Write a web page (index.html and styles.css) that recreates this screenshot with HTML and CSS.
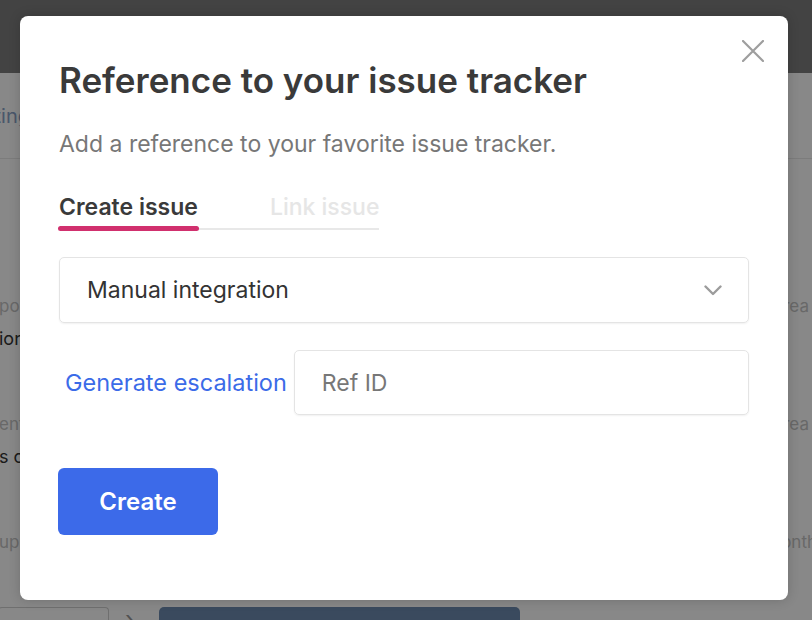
FILE: index.html
```html
<!DOCTYPE html>
<html lang="en">
<head>
<meta charset="utf-8">
<title>Reference to your issue tracker</title>
<link rel="stylesheet" href="styles.css">
</head>
<body>
<div class="page">
  <header class="topbar"></header>
  <nav class="subnav"><span class="subnav-link">Settings</span></nav>
  <main class="rows">
    <div class="row row-tall">
      <div class="row-line"><span class="muted lead">port</span><span class="muted trail">Area</span></div>
      <div class="row-line"><span class="strong lead">ions</span></div>
    </div>
    <div class="row row-tall">
      <div class="row-line"><span class="muted lead">ents</span><span class="muted trail">Area</span></div>
      <div class="row-line"><span class="strong lead">s of</span></div>
    </div>
    <div class="row row-short">
      <div class="row-line"><span class="muted lead">upda</span><span class="muted trail trail-end">Month</span></div>
    </div>
  </main>
  <footer class="page-foot">
    <span class="foot-box"></span>
    <span class="foot-arrow">›</span>
    <span class="foot-btn"></span>
  </footer>
</div>

<div class="overlay"></div>

<section class="modal" role="dialog" aria-labelledby="modal-title">
  <button class="close" aria-label="Close">
    <svg width="22" height="22" viewBox="0 0 22 22"><path d="M1 1 L21 21 M21 1 L1 21" stroke="#9e9e9e" stroke-width="2.2" fill="none" stroke-linecap="round"/></svg>
  </button>
  <h1 id="modal-title" class="title">Reference to your issue tracker</h1>
  <p class="subtitle">Add a reference to your favorite issue tracker.</p>
  <div class="tabs">
    <span class="tab tab-active">Create issue</span>
    <span class="tab tab-idle">Link issue</span>
  </div>
  <div class="select">
    <span class="select-text">Manual integration</span>
    <svg class="chev" width="18" height="11" viewBox="0 0 18 11"><path d="M1.5 1.5 L9 9 L16.5 1.5" stroke="#9c9c9c" stroke-width="2.4" fill="none" stroke-linecap="round" stroke-linejoin="round"/></svg>
  </div>
  <div class="ref-row">
    <a class="gen-link" href="#">Generate escalation</a>
    <div class="ref-input"><span class="placeholder">Ref ID</span></div>
  </div>
  <button class="create">Create</button>
</section>
</body>
</html>
```

FILE: styles.css
```css
* { box-sizing: border-box; }
html, body { margin: 0; padding: 0; }
body {
  width: 812px;
  height: 620px;
  overflow: hidden;
  background: #fff;
  font-family: Inter, "Noto Sans", sans-serif;
  position: relative;
}

/* background page */
.page { display: flex; flex-direction: column; height: 620px; overflow: hidden; }
.topbar { height: 73px; background: #7e7e7e; flex: none; }
.subnav {
  height: 86px;
  border-bottom: 1px solid #e8e8e8;
  display: flex;
  align-items: center;
  flex: none;
}
.subnav-link {
  margin-left: -36px;
  color: #8aa3c8;
  font-size: 20px;
}
.rows { display: flex; flex-direction: column; padding-top: 130px; flex: none; }
.row { display: flex; flex-direction: column; }
.row-tall { height: 118px; }
.row-short { height: 82px; }
.row-line { display: flex; justify-content: space-between; height: 33px; align-items: center; }
.lead { margin-left: -1px; }
.muted { color: #c4c4c4; font-size: 17px; }
.strong { color: #333; font-size: 18px; }
.trail { margin-right: 3px; }
.trail-end { margin-right: -5px; }
.page-foot { display: flex; align-items: flex-start; height: 13px; flex: none; }
.foot-box {
  width: 111px;
  height: 13px;
  border: 1px solid #d0d0d0;
  border-bottom: 0;
  border-radius: 4px 4px 0 0;
  margin-left: -2px;
}
.foot-arrow { color: #999; font-size: 24px; line-height: 13px; margin-left: 16px; margin-top: 6px; height: 13px; }
.foot-btn { width: 361px; height: 13px; background: #6d8bb0; border-radius: 5px 5px 0 0; margin-left: 25px; }

.overlay {
  position: absolute;
  inset: 0;
  background: rgba(0, 0, 0, 0.467);
}

/* modal */
.modal {
  position: absolute;
  left: 20px;
  top: 16px;
  width: 768px;
  height: 584px;
  background: #fff;
  border-radius: 8px;
  box-shadow: 0 0 12px rgba(0, 0, 0, 0.18);
  padding: 43px 39px 0;
  display: flex;
  flex-direction: column;
  align-items: flex-start;
}
.close {
  position: absolute;
  right: 24px;
  top: 24px;
  width: 22px;
  height: 22px;
  padding: 0;
  border: 0;
  background: none;
  display: block;
}
.close svg { display: block; }
.title {
  margin: 0;
  font-size: 35px;
  line-height: 42px;
  font-weight: 600;
  color: #3a3a3a;
}
.subtitle {
  margin: 29px 0 0;
  font-size: 23px;
  line-height: 28px;
  color: #777;
}
.tabs {
  margin-top: 35px;
  display: flex;
  gap: 72px;
  border-bottom: 2px solid #e8e8e8;
}
.tab {
  font-size: 23px;
  line-height: 28px;
  font-weight: 600;
  padding-bottom: 7px;
  position: relative;
}
.tab-active { color: #3a3a3a; }
.tab-active::after {
  content: "";
  position: absolute;
  left: -1px;
  right: -1px;
  bottom: -3px;
  height: 5px;
  border-radius: 3px;
  background: #d1306e;
}
.tab-idle { color: #e6e6e6; font-weight: 500; }

.select {
  margin-top: 27px;
  width: 690px;
  height: 66px;
  border: 1px solid #e4e4e4;
  border-radius: 5px;
  box-shadow: 0 1px 2px rgba(0, 0, 0, 0.06);
  display: flex;
  align-items: center;
  justify-content: space-between;
  padding: 0 26px 0 27px;
}
.select-text { font-size: 23px; color: #333; }
.chev { display: block; }

.ref-row {
  margin-top: 27px;
  width: 690px;
  display: flex;
  align-items: center;
  gap: 7px;
}
.gen-link {
  font-size: 23.5px;
  color: #3b6be8;
  text-decoration: none;
  padding-left: 6px;
  white-space: nowrap;
}
.ref-input {
  flex: 1;
  height: 65px;
  border: 1px solid #e4e4e4;
  border-radius: 5px;
  box-shadow: 0 1px 2px rgba(0, 0, 0, 0.06);
  display: flex;
  align-items: center;
  padding-left: 27px;
}
.placeholder { font-size: 23px; color: #777; }

.create {
  margin-top: 53px;
  margin-left: -1px;
  width: 160px;
  height: 67px;
  border: 0;
  border-radius: 6px;
  background: #3c6ae9;
  color: #fff;
  font-family: inherit;
  font-size: 24px;
  font-weight: 600;
}
```
